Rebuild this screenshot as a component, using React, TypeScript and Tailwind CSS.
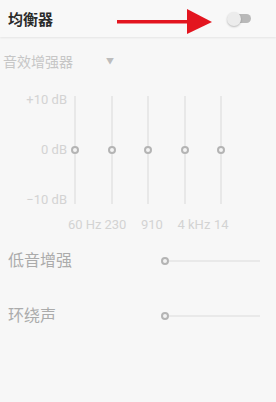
const bands = ['60 Hz', '230', '910', '4 kHz', '14'];

function HSlider() {
  return (
    <div className="flex items-center w-[99px]">
      <div className="w-[8px] h-[8px] rounded-full border-2 border-[#b4b4b4] bg-[#f2f2f2]" />
      <div className="flex-1 h-[2px] bg-[#e9e9e9]" />
    </div>
  );
}

export default function App() {
  return (
    <div
      className="w-[276px] h-[402px] bg-[#f7f7f7] overflow-hidden"
      style={{ fontFamily: 'Roboto, "Noto Sans CJK SC", sans-serif' }}
    >
      {/* header */}
      <div className="relative h-[37px] flex items-center justify-between pl-2 pr-[25px] bg-[#f8f8f8] shadow-[0_1px_2px_rgba(0,0,0,0.08)]">
        <span className="mt-[3px] text-[15px] font-bold text-[#2a2a2a] leading-none">均衡器</span>
        <svg className="absolute left-[115px] top-[8px]" width="100" height="28" viewBox="0 0 100 28">
          <rect x="2" y="12" width="74" height="3.5" fill="#e3151f" />
          <polygon points="72,1 97,14 72,26" fill="#e3151f" />
        </svg>
        <div className="relative w-[24px] h-[16px] flex items-center">
          <div className="absolute left-[4px] right-0 h-[9px] rounded-full bg-[#b9b9b9]" />
          <div className="absolute left-0 w-[14px] h-[14px] rounded-full bg-[#ececec] shadow-[0_1px_2px_rgba(0,0,0,0.25)]" />
        </div>
      </div>

      {/* dropdown */}
      <div className="flex items-center h-[26px] mt-[12px] pl-[3px]">
        <span className="text-[14px] text-[#c6c6c6] leading-none">音效增强器</span>
        <span className="ml-[33px] text-[8px] text-[#bdbdbd] leading-none">▼</span>
      </div>

      {/* equalizer */}
      <div className="flex mt-[21px]">
        <div className="w-[68px] -mt-[3px] flex flex-col gap-[36px] items-end pr-[1px] text-[13px] text-[#d3d3d3] leading-[14px]">
          <span>+10 dB</span>
          <span>0 dB</span>
          <span>−10 dB</span>
        </div>
        {bands.map((b) => (
          <div key={b} className="w-[36.5px] flex flex-col">
            <div className="relative h-[108px] w-[14px] flex justify-center items-center">
              <div className="absolute top-0 bottom-0 w-[2px] bg-[#e8e8e8]" />
              <div className="relative w-[8px] h-[8px] rounded-full border-2 border-[#b4b4b4] bg-[#f4f4f4]" />
            </div>
            <span className="mt-[14px] text-[13px] text-[#d3d3d3] leading-none whitespace-nowrap">{b}</span>
          </div>
        ))}
      </div>

      {/* bass */}
      <div className="flex items-center justify-between h-[24px] mt-[18px] pl-2 pr-[16px]">
        <span className="text-[16px] text-[#ababab] leading-none">低音增强</span>
        <HSlider />
      </div>

      {/* surround */}
      <div className="flex items-center justify-between h-[24px] mt-[31px] pl-2 pr-[16px]">
        <span className="text-[16px] text-[#ababab] leading-none">环绕声</span>
        <HSlider />
      </div>
    </div>
  );
}
